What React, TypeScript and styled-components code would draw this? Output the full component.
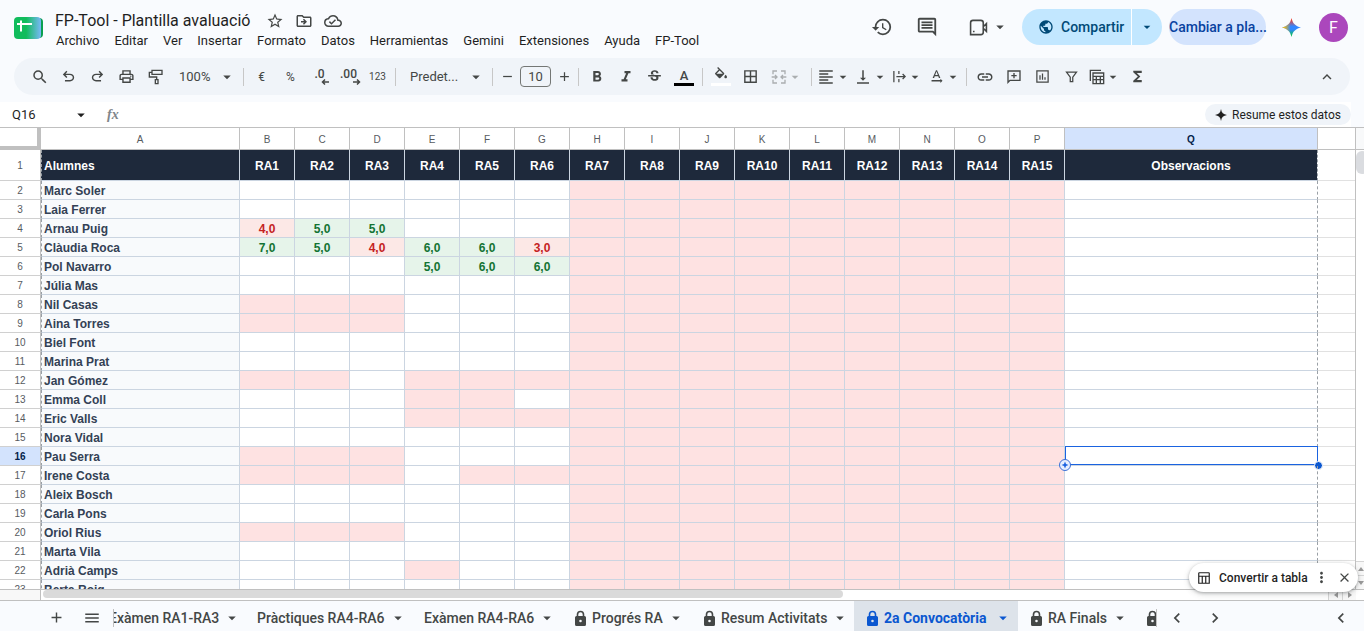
import React from "react";
import styled, { createGlobalStyle, css } from "styled-components";
import {
  MdStarBorder, MdOutlineDriveFileMove, MdOutlineCloudDone, MdHistory, MdOutlineInsertComment,
  MdPublic, MdSearch, MdOutlinePrint, MdFormatBold, MdFormatItalic, MdStrikethroughS, MdBorderAll,
  MdFormatAlignLeft, MdVerticalAlignBottom, MdTextRotationNone, MdLink, MdFunctions,
  MdKeyboardArrowUp, MdKeyboardArrowLeft, MdKeyboardArrowRight, MdMenu, MdAdd, MdRemove,
  MdArrowDropDown, MdMoreVert, MdClose,
} from "react-icons/md";

const ui = `Roboto, "Liberation Sans", sans-serif`;
const sheet = `"Liberation Sans", Arial, sans-serif`;

const Global = createGlobalStyle`
  * { box-sizing: border-box; }
  body { margin: 0; background: #f9fbfe; color: #1f1f1f; font-family: ${ui}; }
  button, input, select { font-family: inherit; color: inherit; margin: 0; }
  button { border: 0; background: none; padding: 0; cursor: pointer; }
`;

const Shell = styled.div`
  height: 100vh;
  display: flex;
  flex-direction: column;
  overflow: hidden;
  position: relative;
`;

/* ---------- header ---------- */
const Header = styled.header`
  display: flex;
  align-items: flex-start;
  height: 58px;
  flex: none;
  padding: 8px 16px 0 14px;
`;
const Logo = styled.svg`
  flex: none;
  margin: 9px 12px 0 0;
`;
const TitleArea = styled.div`
  flex: 1;
  min-width: 0;
`;
const TitleRow = styled.div`
  display: flex;
  align-items: center;
  gap: 9px;
  height: 24px;
  padding-top: 2px;
`;
const Title = styled.h1`
  margin: 0 6px 0 0;
  font-size: 16px;
  font-weight: 400;
  line-height: 22px;
  white-space: nowrap;
`;
const IconButton = styled.button<{ $w?: number; $end?: boolean }>`
  display: inline-flex;
  align-items: center;
  justify-content: ${(p) => (p.$end ? "flex-end" : "center")};
  gap: 3px;
  flex: none;
  width: ${(p) => p.$w ?? 20}px;
  color: #444746;
`;
const Menus = styled.nav`
  display: flex;
  gap: 15px;
  padding-left: 1px;
  height: 17px;
  button { font-size: 13px; line-height: 17px; white-space: nowrap; }
`;
const Actions = styled.div`
  display: flex;
  align-items: center;
  height: 36px;
  margin-top: 1px;
  flex: none;
`;
const Share = styled.div`
  display: flex;
  height: 36px;
  margin: 0 7px 0 13px;
  border-radius: 18px;
  overflow: hidden;
  background: #c2e7ff;
  color: #004a77;
`;
const ShareButton = styled.button`
  display: flex;
  align-items: center;
  gap: 7px;
  width: 109px;
  padding-left: 16px;
  font-size: 14px;
  font-weight: 500;
`;
const ShareMore = styled.button`
  display: flex;
  align-items: center;
  justify-content: center;
  width: 31px;
  border-left: 1px solid #fff;
`;
const Upgrade = styled.button`
  width: 97px;
  height: 36px;
  border-radius: 18px;
  background: #d3e3fd;
  color: #0842a0;
  font-size: 14px;
  font-weight: 500;
  white-space: nowrap;
`;
const Avatar = styled.button`
  width: 29px;
  height: 29px;
  margin-left: 3px;
  border-radius: 50%;
  background: #ab47bc;
  color: #fff;
  font-size: 16px;
`;

/* ---------- toolbar ---------- */
const Toolbar = styled.div`
  display: flex;
  align-items: center;
  flex: none;
  height: 37px;
  margin: 0 14px 7px;
  padding: 0 9px 0 11px;
  border-radius: 19px;
  background: #f0f4f9;
  color: #444746;
`;
const Tool = styled.button<{ $w?: number; $dim?: boolean; $small?: boolean }>`
  display: flex;
  align-items: center;
  justify-content: center;
  flex: none;
  width: ${(p) => p.$w ?? 29}px;
  height: 28px;
  font-size: ${(p) => (p.$small ? 10 : 12)}px;
  opacity: ${(p) => (p.$dim ? 0.4 : 1)};
`;
const LastTool = styled(Tool)`
  margin-left: auto;
`;
const Sep = styled.span`
  flex: none;
  width: 1px;
  height: 18px;
  margin: 0 3px;
  background: #c7c7c7;
`;
const Picker = styled.label<{ $w: number; $pad: number }>`
  position: relative;
  display: flex;
  align-items: center;
  flex: none;
  width: ${(p) => p.$w}px;
  select {
    appearance: none;
    width: 100%;
    height: 28px;
    padding: 0 0 0 ${(p) => p.$pad}px;
    border: 0;
    background: none;
    font-size: 13px;
  }
  svg { position: absolute; right: 4px; pointer-events: none; }
`;
const SizeInput = styled.input`
  flex: none;
  width: 31px;
  height: 21px;
  margin: 0 2px;
  padding: 0;
  border: 1px solid #747775;
  border-radius: 4px;
  background: none;
  font-size: 13px;
  text-align: center;
`;
const Swatch = styled.span<{ $c: string }>`
  display: flex;
  justify-content: center;
  align-items: center;
  width: 20px;
  height: 18px;
  border-bottom: 3px solid ${(p) => p.$c};
  font-size: 13px;
  font-weight: 500;
`;
const Decimals = styled.span`
  display: flex;
  flex-direction: column;
  align-items: flex-end;
  font-size: 12px;
  font-weight: 500;
  line-height: 10px;
  svg { margin-right: -4px; }
`;

/* ---------- formula bar ---------- */
const FormulaBar = styled.div`
  display: flex;
  align-items: center;
  flex: none;
  height: 25px;
  margin-right: 13px;
  background: #fff;
`;
const NameBox = styled.label`
  display: flex;
  align-items: center;
  width: 90px;
  padding: 0 0 0 12px;
  input {
    flex: 1;
    min-width: 0;
    border: 0;
    padding: 0;
    background: none;
    font-size: 13px;
  }
`;
const Fx = styled.span`
  padding-left: 17px;
  color: #80868b;
  font: italic 700 14px "Liberation Serif", serif;
`;
const FormulaInput = styled.input`
  flex: 1;
  min-width: 0;
  margin-left: 12px;
  border: 0;
  outline: 0;
`;
const Summary = styled.button`
  display: flex;
  align-items: center;
  justify-content: center;
  gap: 5px;
  width: 146px;
  height: 21px;
  border-radius: 11px;
  background: #f0f4f9;
  font-size: 12px;
`;

/* ---------- grid ---------- */
const GridArea = styled.main`
  display: flex;
  flex: 1;
  min-height: 0;
  border-top: 1px solid #c0c0c0;
  background: #fff;
`;
const Viewport = styled.div`
  flex: 1;
  min-width: 0;
  overflow: hidden;
  border-right: 1px solid #c0c0c0;
`;
const Table = styled.table`
  width: 100%;
  table-layout: fixed;
  border-collapse: separate;
  border-spacing: 0;
  font-family: ${sheet};
  th, td { padding: 0; overflow: visible; white-space: nowrap; }
`;
const Corner = styled.td`
  height: 22px;
  border-right: 4px solid #c0c0c0;
  border-bottom: 4px solid #c0c0c0;
`;
const ColHead = styled.th<{ $on?: boolean }>`
  height: 22px;
  border-right: 1px solid #c0c0c0;
  border-bottom: 1px solid #c0c0c0;
  background: ${(p) => (p.$on ? "#d3e3fd" : "#fff")};
  color: ${(p) => (p.$on ? "#041e49" : "#575b5f")};
  font-size: 10px;
  font-weight: ${(p) => (p.$on ? 700 : 400)};
  && { padding-top: 2px; }
  &:last-child { border-right: 0; }
`;
const RowHead = styled.th<{ $on?: boolean }>`
  border-right: 1px solid #c0c0c0;
  border-bottom: 1px solid #d0d0d0;
  background: ${(p) => (p.$on ? "#d3e3fd" : "#fff")};
  color: ${(p) => (p.$on ? "#041e49" : "#575b5f")};
  font-size: 10px;
  font-weight: ${(p) => (p.$on ? 700 : 400)};
`;
const Row = styled.tr<{ $h: number }>`
  height: ${(p) => p.$h}px;
`;
type Tone = "fail" | "pass" | "pink" | "none";
const tones: Record<Tone, ReturnType<typeof css>> = {
  fail: css`background: #fce8e6; color: #c5221f;`,
  pass: css`background: #e6f4ea; color: #137333;`,
  pink: css`background: #fee2e2;`,
  none: css`background: #fff;`,
};
const line = css`
  border-right: 1px solid #cbd5e1;
  border-bottom: 1px solid #cbd5e1;
  && { padding-top: 2px; }
`;
const Cell = styled.td<{ $tone: Tone }>`
  ${line}
  ${(p) => tones[p.$tone]}
  font-size: 12px;
  font-weight: 700;
  text-align: center;
`;
const NameCell = styled.td`
  ${line}
  border-left: 1px dashed #9aa0a6;
  background: #f8fafc;
  color: #334155;
  font-size: 12px;
  font-weight: 700;
  && { padding-left: 2px; }
`;
const TitleCell = styled.th<{ $left?: boolean; $end?: boolean }>`
  ${line}
  ${(p) => p.$left && css`border-left: 1px dashed #9aa0a6; text-align: left; && { padding-left: 2px; }`}
  ${(p) => p.$end && css`border-right: 1px dashed #9aa0a6;`}
  background: #1e293b;
  background-clip: ${(p) => (p.$end ? "padding-box" : "border-box")};
  color: #fff;
  font-size: 12px;
`;
const NoteCell = styled.td`
  ${line}
  border-right: 1px dashed #9aa0a6;
  position: relative;
`;
const BlankCell = styled.td`
  border-bottom: 1px solid #e1e1e1;
`;
const Selection = styled.div`
  position: absolute;
  inset: -1px -1px 0 0;
  border: 1px solid #1a63e0;
`;
const FillHandle = styled.span`
  position: absolute;
  right: -6px;
  bottom: -6px;
  width: 9px;
  height: 9px;
  border: 1px solid #fff;
  border-radius: 50%;
  background: #0b57d0;
`;
const AiHandle = styled.svg`
  position: absolute;
  left: -8px;
  bottom: -8px;
`;

const VScroll = styled.div`
  display: flex;
  flex-direction: column;
  flex: none;
  width: 8px;
  overflow: hidden;
`;
const VHead = styled.div`
  height: 22px;
  flex: none;
  background: #f8f9fa;
  border-bottom: 1px solid #c0c0c0;
`;
const VThumb = styled.div`
  width: 12px;
  height: 23px;
  margin-top: 1px;
  border-radius: 6px;
  background: #dadce0;
`;
const ArrowBtn = styled.button<{ $side?: boolean }>`
  display: flex;
  align-items: center;
  justify-content: center;
  flex: none;
  width: ${(p) => (p.$side ? 14 : 10)}px;
  height: ${(p) => (p.$side ? 10 : 14)}px;
  border: solid #d5d5d5;
  border-width: ${(p) => (p.$side ? "0 0 0 1px" : "1px 0 0")};
  background: #f8f8f8;
  color: #999;
  &:first-of-type { margin-${(p) => (p.$side ? "left" : "top")}: auto; }
`;
const HScroll = styled.div`
  display: flex;
  flex: none;
  height: 12px;
  padding-right: 8px;
  border-top: 1px solid #c0c0c0;
  border-bottom: 1px solid #c0c0c0;
  background: #fff;
`;
const HCorner = styled.div`
  width: 41px;
  margin-right: 2px;
  border-right: 1px solid #c0c0c0;
  background: #f8f8f8;
`;
const HThumb = styled.div`
  width: 59%;
  height: 8px;
  border-radius: 4px;
  background: #dadada;
`;

/* ---------- sheet tabs ---------- */
const TabBar = styled.footer`
  display: flex;
  align-items: center;
  flex: none;
  height: 30px;
  padding: 0 13px 0 38px;
  > button, > span { margin-top: 3px; }
`;
const TabStrip = styled.div`
  display: flex;
  flex: 1;
  min-width: 0;
  height: 30px;
  overflow: hidden;
`;
const Edge = styled.span`
  flex: none;
  width: 1px;
  height: 18px;
  background: #c0c0c0;
`;
const StartEdge = styled(Edge)`
  margin-left: 3px;
`;
const Tab = styled.button<{ $w: number; $on?: boolean; $first?: boolean }>`
  display: flex;
  align-items: center;
  flex: none;
  gap: 4px;
  width: ${(p) => p.$w}px;
  height: 30px;
  margin-left: ${(p) => (p.$first ? -16 : 0)}px;
  padding: 3px 6px 0 11px;
  background: ${(p) => (p.$on ? "#dde3ea" : "none")};
  color: ${(p) => (p.$on ? "#0b57d0" : "#444746")};
  font-size: 14px;
  font-weight: ${(p) => (p.$on ? 700 : 500)};
  white-space: nowrap;
  svg { flex: none; }
  svg:last-child { margin-left: auto; }
`;

const Toast = styled.div`
  position: absolute;
  right: 6px;
  bottom: 39px;
  display: flex;
  align-items: center;
  width: 169px;
  height: 29px;
  padding-left: 8px;
  border-radius: 15px;
  background: #fff;
  box-shadow: 0 1px 3px rgba(60, 64, 67, 0.35), 0 2px 6px rgba(60, 64, 67, 0.2);
`;
const ToastAction = styled.button`
  display: flex;
  align-items: center;
  gap: 8px;
  width: 112px;
  font-size: 12px;
  font-weight: 500;
  white-space: nowrap;
`;

/* ---------- drawn icons ---------- */
const Glyph = ({ d, size = 17, fill, weight = 2 }: { d: string; size?: number; fill?: boolean; weight?: number }) => (
  <svg width={size} height={size} viewBox="0 0 24 24" fill={fill ? "currentColor" : "none"}
    stroke={fill ? "none" : "currentColor"} strokeWidth={weight} aria-hidden>
    <path d={d} />
  </svg>
);
const shapes = {
  undo: "M7 19v-2h7.1q1.575 0 2.738-1T18 13.5T16.838 11T14.1 10H7.8l2.6 2.6L9 14L4 9l5-5l1.4 1.4L7.8 8h6.3q2.425 0 4.163 1.575T20 13.5t-1.737 3.925T14.1 19z",
  redo: "M9.9 19q-2.425 0-4.163-1.575T4 13.5t1.738-3.925T9.9 8h6.3l-2.6-2.6L15 4l5 5l-5 5l-1.4-1.4l2.6-2.6H9.9q-1.575 0-2.738 1T6 13.5T7.163 16T9.9 17H17v2z",
  roller: "M6 2h15v6H6zM6 5H2v7h11v4M11 16h4v6h-4z",
  bucket: "M16.56 8.94L7.62 0 6.21 1.41l2.38 2.38-5.15 5.15a1.49 1.49 0 0 0 0 2.12l5.5 5.5c.29.29.68.44 1.06.44s.77-.15 1.06-.44l5.5-5.5c.59-.58.59-1.53 0-2.12zM5.21 10L10 5.21 14.79 10H5.21zM19 11.5s-2 2.17-2 3.5c0 1.1.9 2 2 2s2-.9 2-2c0-1.33-2-3.5-2-3.5z",
  merge: "M9 3H3v5M15 3h6v5M9 21H3v-5M15 21h6v-5M1 12h8M6 9l3 3-3 3M23 12h-8M18 9l-3 3 3 3",
  wrap: "M3 3v18M11 3v5M11 16v5M7 12h14M17 8l4 4-4 4",
  comment: "M3 20V3h18v14H6zM12 6v8M8 10h8",
  chart: "M3 3h18v18H3zM8 10v7M12 7v10M16 13v4",
  filter: "M4 5h16l-6 8v7h-4v-7z",
  calc: "M2 18V2h16M6 6h16v16H6zM6 11h16M6 16h16M11 11v11M17 11v11",
  table: "M4 3h16a1 1 0 0 1 1 1v17H3V4a1 1 0 0 1 1-1zM3 9h18M9 9v12M15 9v12",
  video: "M5 3h10a3 3 0 0 1 3 3v12a3 3 0 0 1-3 3H2V6a3 3 0 0 1 3-3zM18 11l4-4v10l-4-4M6 16v2",
};
const Lock = () => (
  <svg width="15" height="16" viewBox="0 0 15 16" aria-hidden>
    <path d="M4.500 7V4.500a3 3 0 0 1 6 0V7" fill="none" stroke="currentColor" strokeWidth="1.600" />
    <path fillRule="evenodd" fill="currentColor" d="M3.500 6h8A1.500 1.500 0 0 1 13 7.500v7a1.500 1.500 0 0 1-1.500 1.500h-8A1.500 1.500 0 0 1 2 14.500v-7A1.500 1.500 0 0 1 3.500 6zM7.500 9.700a1.300 1.300 0 1 0 0 2.600a1.300 1.300 0 1 0 0-2.600z" />
  </svg>
);
const Star = ({ size, fill }: { size: number; fill: string }) => (
  <svg width={size} height={size} viewBox="0 0 20 20" aria-hidden>
    <path fill={fill} d="M10 0C10.800 6 14 9.200 20 10C14 10.800 10.800 14 10 20C9.200 14 6 10.800 0 10C6 9.200 9.200 6 10 0Z" />
  </svg>
);
const Arrow = ({ back }: { back?: boolean }) => (
  <svg width="8" height="6" viewBox="0 0 8 6" fill="none" stroke="currentColor" strokeWidth="1.500" aria-hidden>
    <path d={back ? "M8 3H1.500M4 .5L1.500 3L4 5.500" : "M0 3h6.500M4 .5L6.500 3L4 5.500"} />
  </svg>
);
const Caret = ({ size = 18 }: { size?: number }) => <MdArrowDropDown size={size} />;
const MenuTool = ({ label, w = 37, dim, children }: { label: string; w?: number; dim?: boolean; children: React.ReactNode }) => (
  <Tool aria-label={label} $w={w} $dim={dim}>{children}<Caret size={16} /></Tool>
);

/* ---------- data ---------- */
const menus = ["Archivo", "Editar", "Ver", "Insertar", "Formato", "Datos", "Herramientas", "Gemini", "Extensiones", "Ayuda", "FP-Tool"];
const letters = "ABCDEFGHIJKLMNOPQ".split("");
const gradeCols = letters.slice(1, 16);
const students: { name: string; pink?: string; marks?: Record<string, string> }[] = [
  { name: "Marc Soler" },
  { name: "Laia Ferrer" },
  { name: "Arnau Puig", marks: { B: "4,0", C: "5,0", D: "5,0" } },
  { name: "Clàudia Roca", marks: { B: "7,0", C: "5,0", D: "4,0", E: "6,0", F: "6,0", G: "3,0" } },
  { name: "Pol Navarro", marks: { E: "5,0", F: "6,0", G: "6,0" } },
  { name: "Júlia Mas" },
  { name: "Nil Casas", pink: "BCD" },
  { name: "Aina Torres", pink: "BCD" },
  { name: "Biel Font" },
  { name: "Marina Prat" },
  { name: "Jan Gómez", pink: "BCEFG" },
  { name: "Emma Coll", pink: "EF" },
  { name: "Eric Valls", pink: "EFG" },
  { name: "Nora Vidal" },
  { name: "Pau Serra", pink: "BCD" },
  { name: "Irene Costa", pink: "BCDFG" },
  { name: "Aleix Bosch" },
  { name: "Carla Pons" },
  { name: "Oriol Rius", pink: "BCD" },
  { name: "Marta Vila" },
  { name: "Adrià Camps", pink: "E" },
  { name: "Berta Roig" },
];
const tabs = [
  { label: "Exàmen RA1-RA3", w: 148 },
  { label: "Pràctiques RA4-RA6", w: 167 },
  { label: "Exàmen RA4-RA6", w: 149 },
  { label: "Progrés RA", w: 129, lock: true },
  { label: "Resum Activitats", w: 163, lock: true },
  { label: "2a Convocatòria", w: 164, lock: true, on: true },
  { label: "RA Finals", w: 116, lock: true },
  { label: "", w: 116, lock: true },
];
const toneOf = (col: string, mark?: string, pink = ""): Tone => {
  if (mark) return parseFloat(mark) >= 5 ? "pass" : "fail";
  return col >= "H" || pink.includes(col) ? "pink" : "none";
};

export default function App() {
  return (
    <Shell>
      <Global />
      <Header>
        <Logo width="29" height="22" viewBox="0 0 29 22" aria-hidden>
          <defs>
            <linearGradient id="face" x1="0" x2="1">
              <stop offset="0.450" stopColor="#11bc5c" />
              <stop offset="1" stopColor="#78b8f8" />
            </linearGradient>
          </defs>
          <rect x="4" y="1" width="25" height="20" rx="4" fill="#0a9f4f" />
          <rect width="27" height="22" rx="4" fill="url(#face)" />
          <path d="M3 7h15M7 3.500v11" stroke="#fff" strokeWidth="2" />
        </Logo>
        <TitleArea>
          <TitleRow>
            <Title>FP-Tool - Plantilla avaluació</Title>
            <IconButton aria-label="Destacar"><MdStarBorder size={18} /></IconButton>
            <IconButton aria-label="Mover"><MdOutlineDriveFileMove size={18} /></IconButton>
            <IconButton aria-label="Estado del documento"><MdOutlineCloudDone size={18} /></IconButton>
          </TitleRow>
          <Menus>{menus.map((m) => <button key={m}>{m}</button>)}</Menus>
        </TitleArea>
        <Actions>
          <IconButton aria-label="Historial" $w={45}><MdHistory size={22} /></IconButton>
          <IconButton aria-label="Comentarios" $w={45}><MdOutlineInsertComment size={22} /></IconButton>
          <IconButton aria-label="Videollamada" $w={60} $end><Glyph d={shapes.video} size={19} /><Caret /></IconButton>
          <Share>
            <ShareButton><MdPublic size={16} />Compartir</ShareButton>
            <ShareMore aria-label="Opciones para compartir"><Caret size={16} /></ShareMore>
          </Share>
          <Upgrade>Cambiar a pla...</Upgrade>
          <IconButton aria-label="Gemini" $w={50}>
            <svg width="19" height="19" viewBox="0 0 20 20" aria-hidden>
              <defs>
                <linearGradient id="sparkV" x1="0" y1="0" x2="0" y2="1">
                  <stop offset="0.100" stopColor="#ea4335" />
                  <stop offset="0.450" stopColor="#3186ff" />
                  <stop offset="0.600" stopColor="#3186ff" />
                  <stop offset="0.900" stopColor="#0ebc5f" />
                </linearGradient>
                <linearGradient id="sparkH">
                  <stop offset="0.100" stopColor="#fbbc04" />
                  <stop offset="0.450" stopColor="#fbbc04" stopOpacity="0" />
                </linearGradient>
              </defs>
              <path fill="url(#sparkV)" d="M10 0C11.500 6 14 8.500 20 10C14 11.500 11.500 14 10 20C8.500 14 6 11.500 0 10C6 8.500 8.500 6 10 0Z" />
              <path fill="url(#sparkH)" d="M10 0C11.500 6 14 8.500 20 10C14 11.500 11.500 14 10 20C8.500 14 6 11.500 0 10C6 8.500 8.500 6 10 0Z" />
            </svg>
          </IconButton>
          <Avatar aria-label="Cuenta">F</Avatar>
        </Actions>
      </Header>

      <Toolbar role="toolbar">
        <Tool aria-label="Buscar"><MdSearch size={18} /></Tool>
        <Tool aria-label="Deshacer"><Glyph d={shapes.undo} fill /></Tool>
        <Tool aria-label="Rehacer"><Glyph d={shapes.redo} fill /></Tool>
        <Tool aria-label="Imprimir"><MdOutlinePrint size={17} /></Tool>
        <Tool aria-label="Copiar formato"><Glyph d={shapes.roller} size={16} /></Tool>
        <Picker $w={70} $pad={9}>
          <select aria-label="Zoom"><option>100%</option></select><Caret />
        </Picker>
        <Sep />
        <Tool>€</Tool>
        <Tool>%</Tool>
        <Tool aria-label="Reducir decimales"><Decimals>.0<Arrow back /></Decimals></Tool>
        <Tool aria-label="Aumentar decimales"><Decimals>.00<Arrow /></Decimals></Tool>
        <Tool $small>123</Tool>
        <Sep />
        <Picker $w={90} $pad={11}>
          <select aria-label="Fuente"><option>Predet...</option></select><Caret />
        </Picker>
        <Sep />
        <Tool aria-label="Reducir tamaño" $w={22}><MdRemove size={15} /></Tool>
        <SizeInput aria-label="Tamaño de fuente" defaultValue="10" />
        <Tool aria-label="Aumentar tamaño" $w={22}><MdAdd size={15} /></Tool>
        <Sep />
        <Tool aria-label="Negrita"><MdFormatBold size={18} /></Tool>
        <Tool aria-label="Cursiva"><MdFormatItalic size={18} /></Tool>
        <Tool aria-label="Tachado"><MdStrikethroughS size={17} /></Tool>
        <Tool aria-label="Color del texto" $w={30}><Swatch $c="#000">A</Swatch></Tool>
        <Sep />
        <Tool aria-label="Color de relleno" $w={30}><Swatch $c="#fff"><Glyph d={shapes.bucket} fill size={16} /></Swatch></Tool>
        <Tool aria-label="Bordes"><MdBorderAll size={17} /></Tool>
        <MenuTool label="Combinar celdas" w={43} dim><Glyph d={shapes.merge} size={16} /></MenuTool>
        <Sep />
        <MenuTool label="Alinear"><MdFormatAlignLeft size={18} /></MenuTool>
        <MenuTool label="Alineación vertical"><MdVerticalAlignBottom size={18} /></MenuTool>
        <MenuTool label="Ajuste de texto"><Glyph d={shapes.wrap} size={15} /></MenuTool>
        <MenuTool label="Rotación"><MdTextRotationNone size={17} /></MenuTool>
        <Sep />
        <Tool aria-label="Insertar enlace"><MdLink size={18} /></Tool>
        <Tool aria-label="Insertar comentario"><Glyph d={shapes.comment} size={16} /></Tool>
        <Tool aria-label="Insertar gráfico"><Glyph d={shapes.chart} size={15} /></Tool>
        <Tool aria-label="Filtro"><Glyph d={shapes.filter} size={15} /></Tool>
        <MenuTool label="Vistas de filtro"><Glyph d={shapes.calc} size={16} /></MenuTool>
        <Tool aria-label="Funciones"><MdFunctions size={17} /></Tool>
        <LastTool aria-label="Ocultar menús"><MdKeyboardArrowUp size={18} /></LastTool>
      </Toolbar>

      <FormulaBar>
        <NameBox><input aria-label="Cuadro de nombres" defaultValue="Q16" /><Caret /></NameBox>
        <Fx>fx</Fx>
        <FormulaInput aria-label="Barra de fórmulas" />
        <Summary><Star size={12} fill="#1f1f1f" />Resume estos datos</Summary>
      </FormulaBar>

      <GridArea>
        <Viewport>
          <Table>
            <colgroup>
              <col width="41" /><col width="199" />
              {gradeCols.map((c) => <col key={c} width="55" />)}
              <col width="253" /><col />
            </colgroup>
            <thead>
              <Row $h={22}>
                <Corner />
                {letters.map((l) => <ColHead key={l} $on={l === "Q"}>{l}</ColHead>)}
                <ColHead />
              </Row>
            </thead>
            <tbody>
              <Row $h={31}>
                <RowHead>1</RowHead>
                <TitleCell $left>Alumnes</TitleCell>
                {gradeCols.map((c, i) => <TitleCell key={c}>RA{i + 1}</TitleCell>)}
                <TitleCell $end>Observacions</TitleCell>
                <BlankCell />
              </Row>
              {students.map((s, i) => {
                const on = i + 2 === 16;
                return (
                  <Row key={s.name} $h={19}>
                    <RowHead $on={on}>{i + 2}</RowHead>
                    <NameCell>{s.name}</NameCell>
                    {gradeCols.map((c) => (
                      <Cell key={c} $tone={toneOf(c, s.marks?.[c], s.pink)}>{s.marks?.[c]}</Cell>
                    ))}
                    <NoteCell>
                      {on && (
                        <Selection>
                          <FillHandle />
                          <AiHandle width="14" height="14" viewBox="0 0 14 14" aria-hidden>
                            <circle cx="7" cy="7" r="5.500" fill="#e8f0fe" stroke="#3b6fd6" />
                            <path fill="#1a63e0" d="M7 3.500L8 6L10.500 7L8 8L7 10.500L6 8L3.500 7L6 6Z" />
                          </AiHandle>
                        </Selection>
                      )}
                    </NoteCell>
                    <BlankCell />
                  </Row>
                );
              })}
            </tbody>
          </Table>
        </Viewport>
        <VScroll>
          <VHead />
          <VThumb />
          <ArrowBtn aria-label="Subir"><svg width="6" height="4"><path d="M0 4L3 0L6 4Z" fill="currentColor" /></svg></ArrowBtn>
          <ArrowBtn aria-label="Bajar"><svg width="6" height="4"><path d="M0 0L3 4L6 0Z" fill="currentColor" /></svg></ArrowBtn>
        </VScroll>
      </GridArea>
      <HScroll>
        <HCorner />
        <HThumb />
        <ArrowBtn $side aria-label="Izquierda"><svg width="4" height="6"><path d="M4 0L0 3L4 6Z" fill="currentColor" /></svg></ArrowBtn>
        <ArrowBtn $side aria-label="Derecha"><svg width="4" height="6"><path d="M0 0L4 3L0 6Z" fill="currentColor" /></svg></ArrowBtn>
      </HScroll>

      <TabBar>
        <IconButton aria-label="Añadir hoja" $w={36}><MdAdd size={17} /></IconButton>
        <IconButton aria-label="Todas las hojas" $w={36}><MdMenu size={18} /></IconButton>
        <StartEdge />
        <TabStrip>
          {tabs.map((t, i) => (
            <Tab key={i} $w={t.w} $on={t.on} $first={i === 0} aria-label={t.label || "Hoja siguiente"}>
              {t.lock && <Lock />}{t.label}<Caret />
            </Tab>
          ))}
        </TabStrip>
        <Edge />
        <IconButton aria-label="Anterior" $w={40}><MdKeyboardArrowLeft size={20} /></IconButton>
        <IconButton aria-label="Siguiente" $w={36}><MdKeyboardArrowRight size={20} /></IconButton>
        <IconButton aria-label="Mostrar panel" $w={118} $end><MdKeyboardArrowLeft size={20} /></IconButton>
      </TabBar>

      <Toast>
        <ToastAction><Glyph d={shapes.table} size={14} />Convertir a tabla</ToastAction>
        <IconButton aria-label="Más opciones" $w={24}><MdMoreVert size={17} /></IconButton>
        <IconButton aria-label="Cerrar" $w={22}><MdClose size={15} /></IconButton>
      </Toast>
    </Shell>
  );
}
